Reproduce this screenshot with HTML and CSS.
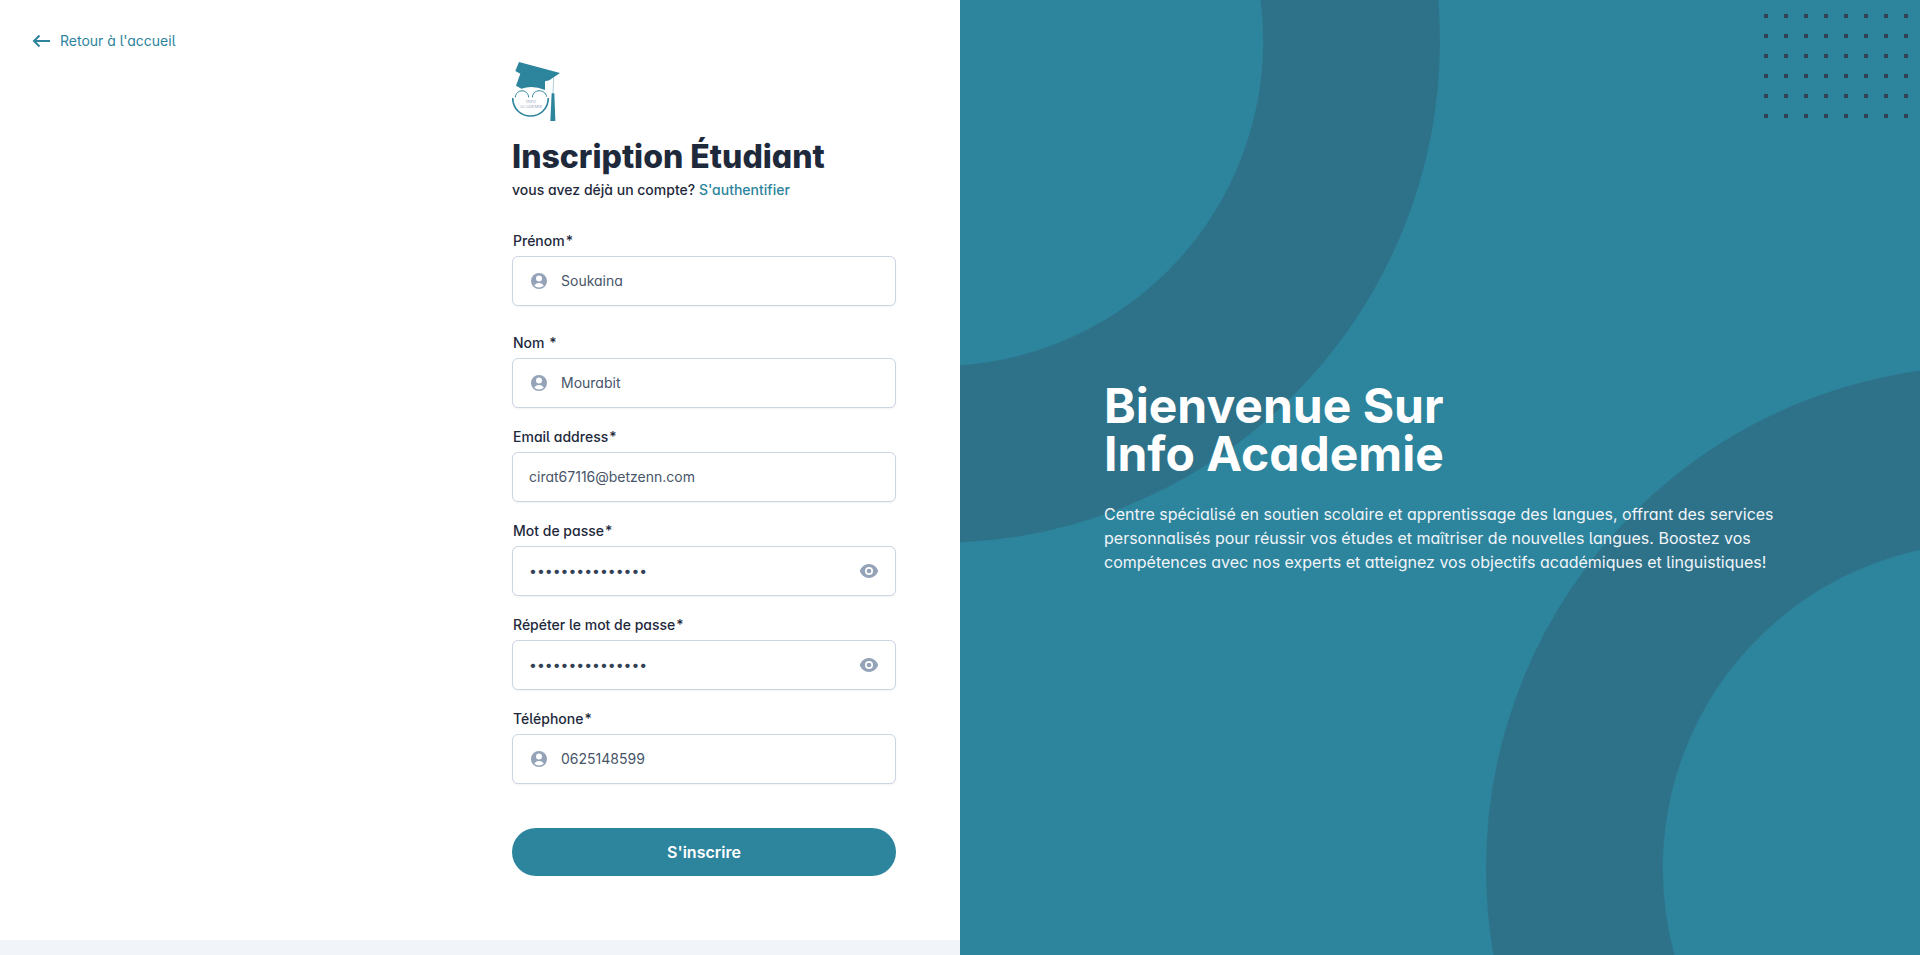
FILE: index.html
```html
<!DOCTYPE html>
<html lang="fr">
<head>
<meta charset="utf-8">
<meta name="viewport" content="width=device-width, initial-scale=1">
<title>Inscription Étudiant</title>
<link rel="stylesheet" href="styles.css">
</head>
<body>
<svg class="sprite" aria-hidden="true">
  <symbol id="icon-user" viewBox="0 0 20 20"><path fill="currentColor" fill-rule="evenodd" clip-rule="evenodd" d="M18 10a8 8 0 11-16 0 8 8 0 0116 0zm-5-2.400a3 3 0 11-6 0 3 3 0 016 0zM10 12a5.990 5.990 0 00-4.793 2.390A6.483 6.483 0 0010 16.500a6.483 6.483 0 004.793-2.110A5.990 5.990 0 0010 12z"/></symbol>
  <symbol id="icon-eye" viewBox="0 0 20 20"><path fill="currentColor" d="M10 12.300a2.300 2.300 0 100-4.600 2.300 2.300 0 000 4.600z"/><path fill="currentColor" fill-rule="evenodd" clip-rule="evenodd" d="M.8 10C2.200 5.943 5.700 3 10 3s7.800 2.943 9.200 7c-1.400 4.057-4.900 7-9.200 7S2.200 14.057.8 10zM14 10a4 4 0 11-8 0 4 4 0 018 0z"/></symbol>
</svg>
<div class="page">
  <main class="panel">
    <a class="back" href="#"><svg class="back-icon" viewBox="0 0 20 20" aria-hidden="true"><path d="M18 10H2.500M7.500 4.500L2 10l5.500 5.500" fill="none" stroke="currentColor" stroke-width="2"/></svg>Retour à l'accueil</a>
    <div class="signup">
      <svg class="logo" viewBox="0 0 144 177" role="img" aria-label="Info Academie">
        <path fill="#2d849d" d="M21 0L144 33 112 55 99 58 99 84Q62 68 28 80L12 71 25 35 10 27Z"/>
        <path fill="none" stroke="#2d849d" stroke-opacity="0.6" stroke-width="2" d="M125 46L123 94"/>
        <path fill="#2d849d" d="M119 94h8l3 83h-15z"/>
        <path fill="none" stroke="#2d849d" stroke-width="5" d="M2 108C4 180 107 180 109 108"/>
        <path fill="none" stroke="#2d849d" stroke-width="3" d="M10 106C12 80 48 80 50 106M61 106C63 80 99 80 104 104"/>
        <text class="logo-text" x="57" y="122">INFO</text>
        <text class="logo-text" x="57" y="138">ACADEMIE</text>
      </svg>
      <h1 class="title">Inscription Étudiant</h1>
      <p class="subtitle">vous avez déjà un compte? <a class="link" href="#">S'authentifier</a></p>
      <form class="form">
        <div class="field field-spaced">
          <label class="label" for="prenom">Prénom<span class="required">*</span></label>
          <div class="control"><svg class="icon" aria-hidden="true"><use href="#icon-user"/></svg><input class="input" id="prenom" type="text" value="Soukaina"></div>
        </div>
        <div class="field">
          <label class="label" for="nom">Nom <span class="required">*</span></label>
          <div class="control"><svg class="icon" aria-hidden="true"><use href="#icon-user"/></svg><input class="input" id="nom" type="text" value="Mourabit"></div>
        </div>
        <div class="field">
          <label class="label" for="email">Email address<span class="required">*</span></label>
          <div class="control"><input class="input" id="email" type="email" value="cirat67116@betzenn.com"></div>
        </div>
        <div class="field">
          <label class="label" for="password">Mot de passe<span class="required">*</span></label>
          <div class="control"><input class="input" id="password" type="password" value="motdepasse12345"><button class="toggle" type="button" aria-label="Afficher le mot de passe"><svg class="icon" aria-hidden="true"><use href="#icon-eye"/></svg></button></div>
        </div>
        <div class="field">
          <label class="label" for="confirm">Répéter le mot de passe<span class="required">*</span></label>
          <div class="control"><input class="input" id="confirm" type="password" value="motdepasse12345"><button class="toggle" type="button" aria-label="Afficher le mot de passe"><svg class="icon" aria-hidden="true"><use href="#icon-eye"/></svg></button></div>
        </div>
        <div class="field">
          <label class="label" for="phone">Téléphone<span class="required">*</span></label>
          <div class="control"><svg class="icon" aria-hidden="true"><use href="#icon-user"/></svg><input class="input" id="phone" type="tel" value="0625148599"></div>
        </div>
        <button class="submit" type="submit">S'inscrire</button>
      </form>
    </div>
  </main>
  <aside class="hero">
    <svg class="rings" viewBox="0 0 960 540" preserveAspectRatio="xMidYMax slice" aria-hidden="true"><g fill="none" stroke="currentColor" stroke-width="100"><circle r="234" cx="196" cy="23"/><circle r="234" cx="790" cy="491"/></g></svg>
    <svg class="dots" viewBox="0 0 220 192" aria-hidden="true"><defs><pattern id="dot-grid" width="20" height="20" patternUnits="userSpaceOnUse"><rect width="4" height="4" fill="currentColor"/></pattern></defs><rect width="220" height="192" fill="url(#dot-grid)"/></svg>
    <div class="hero-content">
      <h2 class="hero-title">Bienvenue Sur<br>Info Academie</h2>
      <p class="hero-text">Centre spécialisé en soutien scolaire et apprentissage des langues, offrant des services personnalisés pour réussir vos études et maîtriser de nouvelles langues. Boostez vos compétences avec nos experts et atteignez vos objectifs académiques et linguistiques!</p>
    </div>
  </aside>
</div>
</body>
</html>
```
FILE: styles.css
```css
*, *::before, *::after { box-sizing: border-box; }

body {
  margin: 0;
  background: #f1f5f9;
  color: #1e293b;
  font-family: Inter, "Liberation Sans", sans-serif;
  font-feature-settings: "cv11", "cv05";
  font-size: 14px;
  line-height: 20px;
}

h1, h2, p { margin: 0; }
input, button { font: inherit; font-feature-settings: inherit; color: inherit; }
a { color: #2d849d; text-decoration: none; }
.sprite { position: absolute; width: 0; height: 0; }

.page {
  display: grid;
  grid-template-columns: 1fr 1fr;
  align-items: start;
  min-height: 100vh;
}

.panel {
  display: flex;
  justify-content: space-between;
  align-items: flex-start;
  padding: 31px 64px 64px 32px;
  background: #fff;
}

.back { display: flex; align-items: center; gap: 8px; }
.back-icon { width: 20px; height: 20px; }

.signup { width: 384px; padding-top: 31px; }
.logo { display: block; width: 48px; height: 59px; margin-bottom: 16px; }
.logo-text { font-family: "Liberation Serif", serif; font-size: 13px; fill: #94a3b8; text-anchor: middle; }
.title { font-size: 32px; line-height: 40px; font-weight: 800; margin-bottom: 3px; }
.subtitle { font-weight: 500; margin-bottom: 32px; }

.form { display: flex; flex-direction: column; }
.field { margin-bottom: 20px; }
.field-spaced { margin-bottom: 28px; }
.label { display: block; padding-left: 1px; margin-bottom: 6px; font-weight: 500; line-height: 18px; }
.required { margin-left: 1px; }

.control {
  display: flex;
  align-items: center;
  gap: 12px;
  height: 50px;
  padding: 0 16px;
  border: 1px solid #cbd5e1;
  border-radius: 6px;
  background: #fff;
  box-shadow: 0 1px 2px rgba(0, 0, 0, 0.05);
  color: #94a3b8;
}
.icon { display: block; flex: none; width: 20px; height: 20px; }
.input { flex: 1; min-width: 0; padding: 0; border: 0; outline: 0; background: none; color: #475569; }
.input[type="password"] { color: #334155; }
.toggle { padding: 0; border: 0; background: none; }

.submit {
  height: 48px;
  margin-top: 24px;
  border: 0;
  border-radius: 24px;
  background: #2d849d;
  color: #fff;
  font-size: 16px;
  font-weight: 600;
}

.hero {
  position: relative;
  display: flex;
  align-items: center;
  justify-content: center;
  min-height: 100vh;
  padding: 64px;
  overflow: hidden;
  background: #2d849d;
}
.rings { position: absolute; inset: 0; width: 100%; height: 100%; color: #334155; opacity: 0.25; }
.dots { position: absolute; top: -66px; right: -64px; width: 220px; height: 192px; color: #334155; }
.hero-content { position: relative; width: 100%; max-width: 672px; }
.hero-title { color: #fff; font-size: 48px; line-height: 48px; font-weight: 700; }
.hero-text { margin-top: 24px; color: #f1f5f9; font-size: 16px; line-height: 24px; }
```
